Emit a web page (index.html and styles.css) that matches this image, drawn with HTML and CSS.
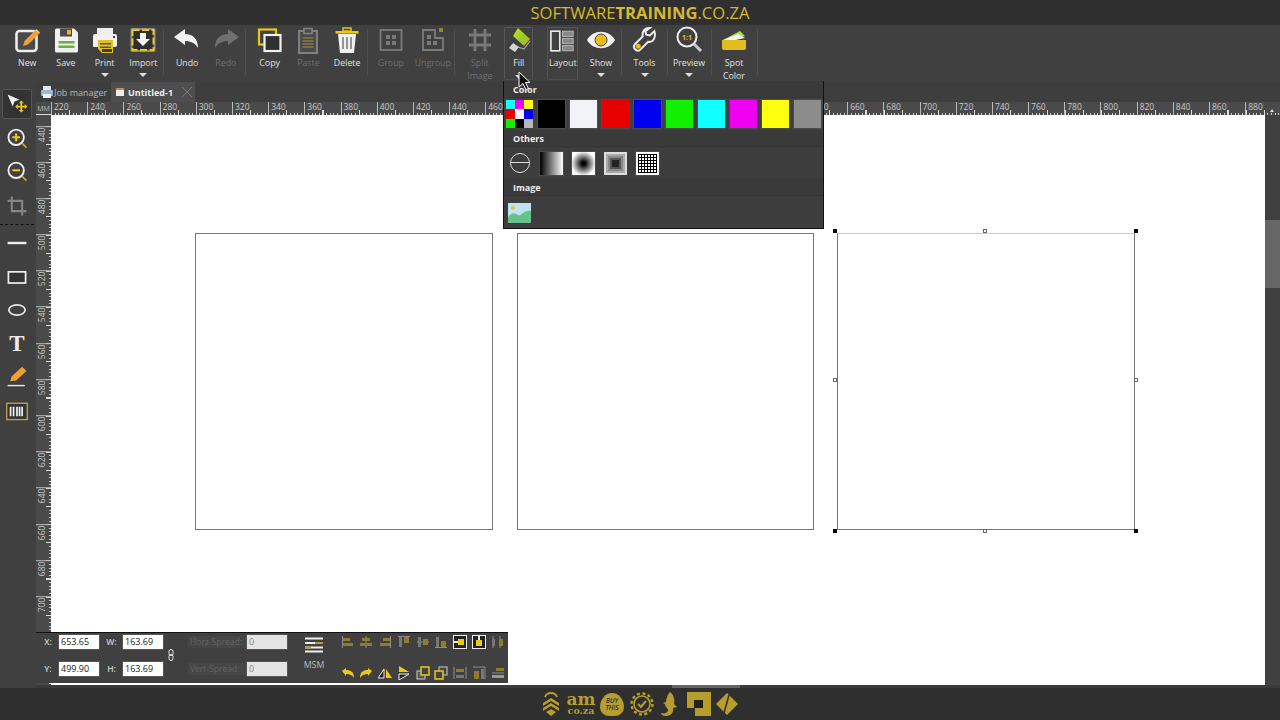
FILE: index.html
```html
<!DOCTYPE html>
<html lang="en">
<head>
<meta charset="utf-8">
<title>SoftwareTraining</title>
<link rel="stylesheet" href="styles.css">
</head>
<body>
<div class="app">
  <header class="title"><span>SOFTWARE<b>TRAINING</b>.CO.ZA</span></header>

  <nav class="toolbar">
    <div class="tb w38"><svg class="ic" viewBox="0 0 28 28"><rect x="3.500" y="5" width="20" height="20" rx="3" fill="#4a4a4a" stroke="#eee" stroke-width="2.600"/><path d="M10 20l1.500-5L22 4.500l4 3.500L15 18.500z" fill="#f0a030"/><path d="M22 4.500l1.500-1.500 3.500 3.500L26 8z" fill="#f7c04a"/></svg><span>New</span></div>
    <div class="tb w39"><svg class="ic" viewBox="0 0 28 28"><path d="M3 4a1.500 1.500 0 0 1 1.500-1.500H22l4 4V25a1.500 1.500 0 0 1-1.500 1.500h-20A1.500 1.500 0 0 1 3 25z" fill="#f0f0f0"/><rect x="8" y="2.500" width="12" height="8" fill="#4a4a4a"/><rect x="15" y="4" width="4" height="4.500" fill="#e0b92a"/><rect x="6.500" y="15" width="16" height="9" fill="#eee"/><rect x="6.500" y="15" width="16" height="2.500" fill="#6fae3c"/><rect x="6.500" y="19.500" width="16" height="2.500" fill="#6fae3c"/></svg><span>Save</span></div>
    <div class="tb w39"><svg class="ic" viewBox="0 0 28 28"><rect x="6" y="2" width="16" height="6" fill="#eee"/><path d="M2 10a2 2 0 0 1 2-2h20a2 2 0 0 1 2 2v9a2 2 0 0 1-2 2H2z" fill="#f2f2f2"/><rect x="22" y="10" width="2" height="2" fill="#444"/><path d="M7 14h15v13H11l-4-4z" fill="#e5c020"/><rect x="9" y="17" width="11" height="1.500" fill="#555"/><rect x="9" y="20.500" width="11" height="1.500" fill="#555"/><rect x="11" y="23" width="10" height="3" fill="#3c3c3c"/></svg><span>Print</span><i class="caret"></i></div>
    <div class="tb w39"><svg class="ic" viewBox="0 0 28 28"><rect x="1.500" y="2" width="25" height="24" rx="2" fill="#8a8a8a"/><rect x="3.500" y="4" width="21" height="20" fill="#2f2f2f" stroke="#e8c818" stroke-width="2" stroke-dasharray="7 2.500"/><path d="M11 7h6v6h4l-7 7-7-7h4z" fill="#f4f4f4"/></svg><span>Import</span><i class="caret"></i></div>
    <i class="sep"></i>
    <div class="tb w39 first"><svg class="ic" viewBox="0 0 28 28"><path d="M1 11L12 3v5c8 0 13 5 13 14-3-5-7-7-13-7v4z" fill="#f2f2f2"/></svg><span>Undo</span></div>
    <div class="tb w39 off"><svg class="ic" viewBox="0 0 28 28"><path d="M27 11L16 3v5C8 8 3 13 3 22c3-5 7-7 13-7v4z" fill="#707070"/></svg><span>Redo</span></div>
    <i class="sep"></i>
    <div class="tb w39 first"><svg class="ic" viewBox="0 0 28 28"><rect x="3" y="3.500" width="17" height="15" fill="none" stroke="#e8c818" stroke-width="2.200"/><rect x="8.500" y="9" width="16" height="16" fill="#303030" stroke="#f2f2f2" stroke-width="2.200"/></svg><span>Copy</span></div>
    <div class="tb w39 off"><svg class="ic" viewBox="0 0 28 28"><rect x="5" y="5" width="18" height="22" fill="#4a4a4a" stroke="#808080" stroke-width="2"/><rect x="10" y="2.500" width="8" height="5" fill="#4a4a4a" stroke="#808080" stroke-width="1.600"/><path d="M8.500 12h11M8.500 15h11M8.500 18h11M8.500 21h11" stroke="#85784a" stroke-width="1.300"/></svg><span>Paste</span></div>
    <div class="tb w39"><svg class="ic" viewBox="0 0 28 28"><path d="M5 8h18l-2 19H7z" fill="#f0f0f0"/><rect x="2.500" y="5" width="23" height="2.600" fill="#ecc818"/><rect x="10" y="2" width="8" height="3" fill="none" stroke="#ecc818" stroke-width="1.400"/><path d="M10 11v12M14 11v12M18 11v12" stroke="#777" stroke-width="1.500"/></svg><span>Delete</span></div>
    <i class="sep"></i>
    <div class="tb w39 first off"><svg class="ic" viewBox="0 0 28 28"><rect x="3.500" y="4" width="21" height="20" fill="none" stroke="#7a7a7a" stroke-width="1.800"/><path d="M9 9h4v4H9zM15 9h4v4h-4zM9 15h4v4H9zM15 15h4v4h-4z" fill="#7a7a7a"/></svg><span>Group</span></div>
    <div class="tb w43 off ug"><svg class="ic" viewBox="0 0 28 28"><path d="M4 4h12v8h8v12H4z" fill="none" stroke="#7a7a7a" stroke-width="1.800"/><path d="M8 9h4v4H8zM8 15h4v4H8zM14 15h4v4h-4z" fill="#7a7a7a"/><rect x="20" y="2" width="4" height="4" fill="#8b8b30"/></svg><span>Ungroup</span></div>
    <i class="sep"></i>
    <div class="tb w39 split off"><svg class="ic" viewBox="0 0 28 28"><path d="M9 3v22M19 3v22M3 9h22M3 19h22" stroke="#7a7a7a" stroke-width="2.800" fill="none"/></svg><span>Split<br>Image</span></div>
    <div class="tb boxed fill"><svg class="ic" viewBox="0 0 28 28"><defs><linearGradient id="roller" x1="0" y1="0" x2="1" y2="1"><stop offset="0" stop-color="#e6d81e"/><stop offset="0.550" stop-color="#8ccf2a"/><stop offset="1" stop-color="#f09a20"/></linearGradient></defs><path d="M8 9L13 1l12 11-6 7z" fill="url(#roller)"/><path d="M25 14l-6 8-6-2" fill="none" stroke="#aaa" stroke-width="1.200"/><path d="M8 16l6 4-4 5-6-4z" fill="#d4d4d4"/></svg><span>Fill</span><i class="caret"></i></div>
    <div class="tb boxed layout"><svg class="ic wide" viewBox="0 0 28 28"><rect x="1" y="3" width="10" height="22" fill="none" stroke="#eee" stroke-width="1.800"/><rect x="14" y="3" width="12" height="6" fill="#888" stroke="#bbb"/><rect x="14" y="11" width="12" height="6" fill="#888" stroke="#bbb"/><rect x="14" y="19" width="12" height="6" fill="#888" stroke="#bbb"/></svg><span>Layout</span></div>
    <div class="tb w40"><svg class="ic" viewBox="0 0 28 28"><path d="M0 14C6 3 22 3 28 14 22 25 6 25 0 14z" fill="#f2f2f2"/><circle cx="14" cy="14" r="6" fill="#e8bd1c" stroke="#444" stroke-width="1"/></svg><span>Show</span><i class="caret"></i></div>
    <i class="sep near"></i>
    <div class="tb w45b"><svg class="ic tw" viewBox="0 0 28 28"><path d="M25 4l-5 5-4-1-1-4 5-3.500C15 0 11 4 12 10L3 19c-3 4 3 9 6 6l9-9c6 1 9-5 7-12z" fill="none" stroke="#eee" stroke-width="2.200"/><circle cx="7" cy="21" r="2.800" fill="#e8bd1c"/></svg><span>Tools</span><i class="caret"></i></div>
    <i class="sep near neg"></i>
    <div class="tb w45"><svg class="ic" viewBox="0 0 28 28"><circle cx="12" cy="11" r="9.500" fill="none" stroke="#eee" stroke-width="2"/><path d="M19 18l7 7" stroke="#ccc" stroke-width="3"/><text class="one" x="12" y="14">1:1</text></svg><span>Preview</span><i class="caret"></i></div>
    <i class="sep near neg"></i>
    <div class="tb w46"><svg class="ic" viewBox="0 0 28 28"><path d="M3 14L20 5l5 5-15 5z" fill="#a6e040"/><path d="M3 14l15-6 7 4-14 3z" fill="#f2f2f2"/><path d="M2 14h24v8a2 2 0 0 1-2 2H4a2 2 0 0 1-2-2z" fill="#e3bd1e"/></svg><span>Spot<br>Color</span></div>
    <i class="sep near"></i>
  </nav>

  <div class="work">
    <aside class="tools">
      <div class="tool active"><svg class="t" viewBox="0 0 28 28"><path d="M3 3l14 6-6 2-2 6z" fill="#f2f2f2"/><path d="M19 10l3 3h-2v3h3v-2l3 3-3 3v-2h-3v3h2l-3 3-3-3h2v-3h-3v2l-3-3 3-3v2h3v-3h-2z" fill="#ecc818"/></svg></div>
      <div class="tool"><svg class="t" viewBox="0 0 28 28"><circle cx="13" cy="12" r="9" fill="none" stroke="#eee" stroke-width="2.200"/><path d="M8.500 12h9M13 7.500v9" stroke="#ecc818" stroke-width="2.400"/><path d="M20 19l5 5" stroke="#c9a820" stroke-width="2"/></svg></div>
      <div class="tool"><svg class="t" viewBox="0 0 28 28"><circle cx="13" cy="12" r="9" fill="none" stroke="#eee" stroke-width="2.200"/><path d="M8.500 12h9" stroke="#ecc818" stroke-width="2.400"/><path d="M20 19l5 5" stroke="#c9a820" stroke-width="2"/></svg></div>
      <div class="tool cropt"><svg class="t" viewBox="0 0 28 28"><path d="M8 3v17h17M3 8h17v17" fill="none" stroke="#858585" stroke-width="2.400"/></svg></div>
      <div class="dash"></div>
      <div class="tool"><svg class="t" viewBox="0 0 28 28"><path d="M3 14h22" stroke="#eee" stroke-width="2.800"/></svg></div>
      <div class="tool"><svg class="t" viewBox="0 0 28 28"><rect x="4" y="8" width="20" height="13" fill="#333" stroke="#eee" stroke-width="2"/></svg></div>
      <div class="tool"><svg class="t" viewBox="0 0 28 28"><ellipse cx="14" cy="14" rx="9.500" ry="6" fill="none" stroke="#eee" stroke-width="2"/></svg></div>
      <div class="tool glyph">T</div>
      <div class="tool"><svg class="t" viewBox="0 0 28 28"><path d="M6 19l2-6L20 2l5 5-12 11z" fill="#f0a030"/><path d="M3 24h20" stroke="#eee" stroke-width="1.600"/></svg></div>
      <div class="tool"><svg class="t" viewBox="0 0 28 28"><rect x="2" y="5" width="24" height="19" fill="#333" stroke="#b9a24a" stroke-width="1.600"/><path d="M6.500 9v11M10 9v11M14 9v11M17 9v11M20 9v11" stroke="#eee" stroke-width="2"/></svg></div>
    </aside>

    <div class="doc">
      <div class="tabs">
        <div class="tab job"><svg class="mini" viewBox="0 0 14 14"><rect x="3" y="1" width="8" height="4" fill="#dfe8f2"/><rect x="1" y="5" width="12" height="6" rx="1" fill="#9db9d6"/><rect x="3" y="9" width="8" height="4" fill="#eef2f6"/></svg><span>Job manager</span></div>
        <div class="tab cur"><i class="docic"></i><b>Untitled-1</b><svg class="close" viewBox="0 0 12 12"><path d="M1 1l10 10M11 1L1 11" stroke="#777" stroke-width="1"/></svg></div>
      </div>
      <div class="rulerh">
        <span class="corner">MM</span>
        <div class="hscale">
          <span>220</span><span>240</span><span>260</span><span>280</span><span>300</span><span>320</span><span>340</span><span>360</span><span>380</span><span>400</span><span>420</span><span>440</span><span>460</span><span>480</span><span>500</span><span>520</span><span>540</span><span>560</span><span>580</span><span>600</span><span>620</span><span>640</span><span>660</span><span>680</span><span>700</span><span>720</span><span>740</span><span>760</span><span>780</span><span>800</span><span>820</span><span>840</span><span>860</span><span>880</span>
        </div>
      </div>
      <div class="body">
        <div class="rulerv">
          <span>440</span><span>460</span><span>480</span><span>500</span><span>520</span><span>540</span><span>560</span><span>580</span><span>600</span><span>620</span><span>640</span><span>660</span><span>680</span><span>700</span>
        </div>
        <main class="canvas">
          <div class="page p1"></div>
          <div class="page p2"></div>
          <div class="page p3"></div>
          <i class="h big tl"></i>
          <i class="h big tr"></i>
          <i class="h big bl"></i>
          <i class="h big br"></i>
          <i class="h tm"></i>
          <i class="h bm"></i>
          <i class="h ml"></i>
          <i class="h mr"></i>
        </main>
        <div class="scrollv"><i class="up"></i><i class="thumb"></i></div>
      </div>
      <div class="scrollh"><i></i></div>
    </div>
  </div>

  <footer class="foot">
    <svg class="lg l1" viewBox="0 0 20 26"><path d="M4 6c1-3 3-4 6-4s5 1 6 4" fill="none" stroke="#b79d2e" stroke-width="2"/><path d="M2 12l8-5 8 5v3l-8-5-8 5zM2 17l8-5 8 5v3l-8-5-8 5zM5 21l5-3 5 3-5 4z" fill="#b79d2e"/></svg>
    <div class="am"><b>am</b><b class="cz">co.za</b></div>
    <div class="buy"><span>BUY<br>THIS</span></div>
    <svg class="lg l4" viewBox="0 0 24 24"><circle cx="12" cy="12" r="8" fill="none" stroke="#b79d2e" stroke-width="1.600"/><circle cx="12" cy="12" r="10.500" fill="none" stroke="#b79d2e" stroke-width="2.400" stroke-dasharray="3 2.500"/><path d="M8 12l3 3 5-6" fill="none" stroke="#b79d2e" stroke-width="2"/></svg>
    <svg class="lg l5" viewBox="0 0 18 26"><path d="M9 1c4 3 5 8 4 12l3 3-4 1c1 4-2 8-7 8-3 0-5-1-5-3 3 1 7 0 7-3 0-2-3-3-3-6L2 12l3-1c0-4 2-8 4-10z" fill="#b79d2e"/></svg>
    <svg class="lg l6" viewBox="0 0 24 24"><path d="M0 0h24v24H8v-8h8V8H8v8H0z" fill="#b79d2e"/><rect x="7" y="8" width="9" height="8" fill="#222"/></svg>
    <svg class="lg l7" viewBox="0 0 24 24"><path d="M12 1l11 11-11 11L1 12z" fill="#b79d2e"/><path d="M14 3L9 21" stroke="#2f2f2f" stroke-width="1.500"/></svg>
  </footer>

  <div class="props">
    <div class="pcol first-col">
      <div class="prow"><label>X:</label><span class="inp">653.65</span><label class="l2">W:</label><span class="inp">163.69</span></div>
      <div class="prow"><label>Y:</label><span class="inp">499.90</span><label class="l2">H:</label><span class="inp">163.69</span></div>
    </div>
    <svg class="chain" viewBox="0 0 6 12"><rect x="1" y="0.500" width="4" height="6" rx="2" fill="none" stroke="#eee"/><rect x="1" y="5.500" width="4" height="6" rx="2" fill="none" stroke="#eee"/></svg>
    <div class="pcol spread">
      <div class="prow"><label class="dis">Horz-Spread:</label><span class="inp dim">0</span></div>
      <div class="prow"><label class="dis">Vert-Spread:</label><span class="inp dim">0</span></div>
    </div>
    <div class="msm">
      <svg class="msmic" viewBox="0 0 18 16"><path d="M0 1.500h18M0 6h18M0 10.500h18M0 14.500h18" stroke="#eee" stroke-width="1.800"/><path d="M10 6h8M0 10.500h6" stroke="#b79d2e" stroke-width="1.800"/></svg>
      <span>MSM</span>
    </div>
    <div class="aligns">
      <svg viewBox="0 0 14 14"><path d="M1.500 1v12" stroke="#8d8d8d"/><path d="M2 3h7v3H2zM2 8h10v3H2z" fill="#8c7c2c"/></svg>
      <svg viewBox="0 0 14 14"><path d="M7 1v12" stroke="#8d8d8d"/><path d="M3 3h8v3H3zM1 8h12v3H1z" fill="#8c7c2c"/></svg>
      <svg viewBox="0 0 14 14"><path d="M12.500 1v12" stroke="#8d8d8d"/><path d="M5 3h7v3H5zM2 8h10v3H2z" fill="#8c7c2c"/></svg>
      <svg viewBox="0 0 14 14"><path d="M1 1.500h12" stroke="#8d8d8d"/><path d="M2 2h3v10H2z" fill="#777"/><path d="M7 2h5v6H7z" fill="#8c7c2c"/></svg>
      <svg viewBox="0 0 14 14"><path d="M1 7h12" stroke="#8d8d8d"/><path d="M2 2h3v10H2z" fill="#777"/><path d="M7 4h5v6H7z" fill="#8c7c2c"/></svg>
      <svg viewBox="0 0 14 14"><path d="M1 12.500h12" stroke="#8d8d8d"/><path d="M2 2h3v10H2z" fill="#777"/><path d="M7 6h5v6H7z" fill="#8c7c2c"/></svg>
      <svg viewBox="0 0 14 14"><rect x="0.500" y="0.500" width="13" height="13" fill="#222" stroke="#eee"/><path d="M5 4h6v6H5z" fill="#ecc818"/><path d="M1 7h4" stroke="#eee" stroke-width="2"/></svg>
      <svg viewBox="0 0 14 14"><rect x="0.500" y="0.500" width="13" height="13" fill="#222" stroke="#eee"/><path d="M4 5h6v6H4z" fill="#ecc818"/><path d="M7 1v4" stroke="#eee" stroke-width="2"/></svg>
      <svg viewBox="0 0 14 14"><path d="M2 1v12M9 1v12" stroke="#8d8d8d"/><path d="M1 4h3v7H1z" fill="#777"/><path d="M8 4h4v7H8z" fill="#8c7c2c"/></svg>
      <svg viewBox="0 0 14 14"><path d="M1 5l4-3v2c5 0 8 2 8 8-2-3-4-4-8-4v2z" fill="#ecc818"/></svg>
      <svg viewBox="0 0 14 14"><path d="M13 5L9 2v2C4 4 1 6 1 12c2-3 4-4 8-4v2z" fill="#ecc818"/></svg>
      <svg viewBox="0 0 14 14"><path d="M6 3v9H0z" fill="#222" stroke="#eee"/><path d="M8 3v9h6z" fill="#ecc818"/></svg>
      <svg viewBox="0 0 14 14"><path d="M2 6h10L2 0z" fill="#ecc818"/><path d="M2 8h10L2 14z" fill="#222" stroke="#eee"/></svg>
      <svg viewBox="0 0 14 14"><rect x="1" y="5" width="8" height="8" fill="#555" stroke="#ccc"/><rect x="5" y="1" width="8" height="8" fill="#444" stroke="#ecc818" stroke-width="1.500"/></svg>
      <svg viewBox="0 0 14 14"><rect x="5" y="1" width="8" height="8" fill="#444" stroke="#ccc"/><rect x="1" y="5" width="8" height="8" fill="#444" stroke="#ecc818" stroke-width="1.500"/></svg>
      <svg viewBox="0 0 14 14"><path d="M1 1v12M13 1v12" stroke="#8d8d8d"/><path d="M3 3h8v3H3z" fill="#8c7c2c"/><path d="M3 9h8v3H3z" fill="#777"/></svg>
      <svg viewBox="0 0 14 14"><path d="M1 1h12M13 1v12" stroke="#8d8d8d"/><path d="M2 5h5v8H2z" fill="#8c7c2c"/><path d="M9 3h3v10H9z" fill="#777"/></svg>
      <svg viewBox="0 0 14 14"><path d="M1 7h12" stroke="#8d8d8d"/><path d="M5 2h8v3H5z" fill="#8c7c2c"/><path d="M1 9h12v3H1z" fill="#999"/></svg>
    </div>
  </div>

  <section class="pop">
    <h4 class="ph">Color</h4>
    <div class="swrow">
      <div class="mosaic"><i class="c1"></i><i class="c2"></i><i class="c3"></i><i class="c4"></i><i class="c5"></i><i class="c6"></i><i class="c7"></i><i class="c8"></i><i class="c9"></i></div>
      <i class="sw black"></i><i class="sw white"></i><i class="sw red"></i><i class="sw blue"></i><i class="sw green"></i><i class="sw cyan"></i><i class="sw magenta"></i><i class="sw yellow"></i><i class="sw gray"></i>
    </div>
    <h4 class="ph">Others</h4>
    <div class="otrow">
      <div class="none"><i></i></div>
      <i class="gr linear"></i><i class="gr radial"></i><i class="gr rect"></i><i class="gr grid"></i>
    </div>
    <h4 class="ph">Image</h4>
    <div class="imrow">
      <svg class="pic" viewBox="0 0 23 20"><rect width="23" height="20" fill="#bfe4ef"/><circle cx="5" cy="5" r="2" fill="#e8c040"/><path d="M0 14c4-5 7-4 10-2s6-6 13-4v12H0z" fill="#68c38a"/></svg>
    </div>
  </section>

  <svg class="cursor" viewBox="0 0 14 20"><path d="M1 1v15l4-3.500 3 6 2.500-1-3-6H12z" fill="#111" stroke="#fff" stroke-width="1"/></svg>
</div>
</body>
</html>
```

FILE: styles.css
```css
* { box-sizing: border-box; }
html, body { margin: 0; padding: 0; }
body { width: 1280px; height: 720px; overflow: hidden; background: #2f2f2f; font-family: "Open Sans", "Noto Sans", sans-serif; color: #ddd; }
i { display: block; font-style: normal; }
.app { position: relative; width: 1280px; height: 720px; display: flex; flex-direction: column; overflow: hidden; }

.title { height: 25px; background: #2f2f2f; display: flex; justify-content: center; align-items: center; color: #d8b92c; font-size: 16.600px; line-height: 25px; }
.title b { font-weight: 700; }

.toolbar { height: 57px; background: #404040; display: flex; padding: 1px 0 0 8px; flex: none; }
.tb { position: relative; display: flex; flex-direction: column; align-items: center; font-size: 8.800px; line-height: 13px; color: #e0e0e0; text-align: center; flex: none; }
.tb span { margin-top: 3px; }
.ic { width: 28px; height: 28px; flex: none; }
.ic.tw { width: 25px; }
.w38 { width: 38.500px; } .w39 { width: 38.750px; } .w40 { width: 40px; } .w43 { width: 43px; } .w45 { width: 44px; } .w45b { width: 45px; } .w46 { width: 46px; }
.first { margin-left: 4px; }
.ug { margin-left: 1px; }
.split { margin-left: 5.250px; }
.off { color: #6e6e6e; }
.sep { width: 1px; height: 46px; margin-top: 3px; background: #4e4e4e; flex: none; }
.near { margin: 3px 0 0; }
.neg { margin-right: -1px; }
.tb.boxed { height: 53px; border: 1px solid #555; border-bottom-color: #4c4c4c; margin-top: 1px; border-radius: 2px; }
.tb.boxed .ic { margin-top: -1px; }
.tb.boxed span { margin-top: 2px; }
.fill { width: 29px; margin-left: 5px; }
.layout { width: 31px; margin: 0 2.750px 0 14px; }
.ic.wide { width: 25px; }
.caret { position: absolute; top: 47px; left: 50%; margin-left: -4px; width: 0; height: 0; border: 4px solid transparent; border-top-color: #ddd; border-bottom: 0; }
.one { font: 700 7px "Open Sans", sans-serif; fill: #e8bd1c; text-anchor: middle; }

.work { flex: 1; display: flex; min-height: 0; }
.tools { width: 36px; flex: none; background: #404040; padding: 7px 0 0 2px; display: flex; flex-direction: column; }
.tool { width: 30px; height: 33.500px; display: flex; align-items: center; justify-content: center; flex: none; }
.tool.active { background: #333; border: 1px solid #555; border-radius: 2px; height: 30px; margin-bottom: 3px; }
.t { width: 24px; height: 24px; }
.dash { width: 34px; height: 0; margin: 2px 0 2px -2px; border-top: 1px dashed #111; }
.cropt { margin-bottom: -1px; }
.glyph { font: 700 23px "Liberation Serif", serif; color: #eee; line-height: 30px; }

.doc { flex: 1; display: flex; flex-direction: column; min-width: 0; }
.tabs { height: 20px; background: #3e3e3e; display: flex; align-items: stretch; flex: none; font-size: 9px; padding-left: 4px; }
.tab { display: flex; align-items: center; }
.job { width: 71px; color: #b8b8b8; }
.mini { width: 14px; height: 14px; }
.cur { width: 84px; background: #4e4e4e; color: #eee; padding-left: 5px; font-size: 9px; }
.docic { width: 8px; height: 8px; background: #eee; border-top: 2px solid #c98a5a; margin-right: 4px; }
.close { width: 12px; height: 12px; margin-left: auto; margin-right: 2px; }

.rulerh { height: 13px; background: #4a4a4a; display: flex; flex: none; position: relative; }
.corner { width: 15px; font-size: 7px; line-height: 14px; color: #bbb; text-align: center; border-bottom: 1px solid #ddd; }
.hscale { flex: 1; display: flex; overflow: hidden;
  background:
    repeating-linear-gradient(to right, #ddd 0 1px, transparent 1px 18.100px) 0 100% / 100% 5px no-repeat,
    repeating-linear-gradient(to right, #ccc 0 1px, transparent 1px 3.620px) 0 100% / 100% 2px no-repeat; }
.hscale span { flex: none; width: 36.200px; height: 13px; padding-left: 2px; border-left: 1px solid #bbb; font-size: 8.500px; line-height: 10px; color: #c8c8c8; }

.body { flex: 1; display: flex; min-height: 0; }
.rulerv { width: 15px; flex: none; background-color: #4a4a4a; padding-top: 10.500px; overflow: hidden; display: flex; flex-direction: column;
  background-image:
    repeating-linear-gradient(to bottom, #ddd 0 1px, transparent 1px 18.100px),
    repeating-linear-gradient(to bottom, #ccc 0 1px, transparent 1px 3.620px);
  background-size: 5px 100%, 2px 100%;
  background-position: 100% 10.500px, 100% 10.500px;
  background-repeat: no-repeat; }
.rulerv span { flex: none; height: 36.200px; writing-mode: vertical-rl; transform: rotate(180deg); font-size: 8.500px; line-height: 10px; color: #c8c8c8; text-align: right; padding: 0 1px 1px 0; border-bottom: 1px solid #bbb; }

.canvas { flex: 1; position: relative; background: #fff; min-width: 0; }
.page { position: absolute; width: 298px; height: 297px; top: 118px; border: 1px solid #777; background: #fff; }
.p1 { left: 144px; }
.p2 { left: 466px; width: 297px; }
.p3 { left: 786px; border-top-color: #ccc; }
.h { position: absolute; width: 4px; height: 4px; background: #fff; border: 1px solid #666; }
.h.big { background: #000; border: 0; }
.tl { left: 782px; top: 114px; } .tr { left: 1083px; top: 114px; }
.bl { left: 782px; top: 414px; } .br { left: 1083px; top: 414px; }
.tm { left: 932px; top: 114px; } .bm { left: 932px; top: 414px; }
.ml { left: 782px; top: 263px; } .mr { left: 1083px; top: 263px; }

.scrollv { width: 15px; flex: none; background: #404040; position: relative; }
.up { position: absolute; left: 5px; top: -6px; width: 0; height: 0; border: 2px solid transparent; border-bottom: 3px solid #ddd; border-top: 0; }
.thumb { position: absolute; left: 0; top: 105px; width: 15px; height: 68px; background: #666; }

.scrollh { height: 3px; background: #3a3a3a; flex: none; position: relative; }
.scrollh i { position: absolute; left: 636px; width: 68px; height: 3px; background: #666; }

.foot { height: 32px; flex: none; background: #2f2f2f; display: flex; align-items: center; padding-left: 541px; }
.lg { flex: none; }
.l1 { width: 20px; height: 26px; margin-right: 6px; }
.am { width: 28px; height: 23px; display: flex; flex-direction: column; align-items: center; color: #b79d2e; font-family: "DejaVu Serif", serif; }
.am b { font-size: 17px; line-height: 13px; height: 13px; }
.am .cz { font-size: 9.500px; line-height: 10px; height: 10px; }
.buy { width: 24px; height: 23px; margin-left: 5px; background: #b79d2e; border-radius: 50% 50% 40% 40% / 62% 62% 38% 38%; color: #2f2f2f; font-size: 6.500px; line-height: 7px; font-style: italic; text-align: center; display: flex; align-items: center; justify-content: center; font-weight: 600; }
.l4 { width: 24px; height: 24px; margin-left: 6px; }
.l5 { width: 18px; height: 26px; margin-left: 7px; }
.l6 { width: 24px; height: 24px; margin-left: 8px; }
.l7 { width: 24px; height: 24px; margin-left: 4px; }

.props { position: absolute; left: 36px; top: 632px; width: 472px; height: 51px; background: #404040; border-top: 1px solid #111; display: flex; font-size: 9px; color: #ccc; }
.pcol { display: flex; flex-direction: column; gap: 13px; padding-top: 2px; }
.prow { display: flex; align-items: center; height: 14px; }
.prow label { width: 23px; padding-bottom: 1px; text-align: center; font-weight: 600; font-size: 8.500px; }
.first-col label { padding-left: 1px; }
.prow label.l2 { width: 24px; }
.inp { width: 40px; height: 14px; background: #fff; color: #222; font-size: 9px; line-height: 14px; padding-left: 2px; box-shadow: 0 0 0 1px #555; }
.chain { width: 6px; height: 12px; margin: 16px 0 0 5px; flex: none; }
.spread { margin-left: 14px; }
.prow label.dis { width: 59px; color: #636363; font-weight: 400; font-size: 8.500px; text-align: left; padding-left: 2px; background: #464646; }
.inp.dim { background: #e4e4e4; color: #888; }
.msm { width: 18px; margin-left: 18px; display: flex; flex-direction: column; align-items: center; padding-top: 4px; font-size: 8.800px; color: #bbb; }
.msmic { width: 18px; height: 16px; flex: none; }
.msm span { margin-top: 6px; }
.aligns { margin-left: 17.500px; display: grid; grid-template-columns: repeat(9, 14px); column-gap: 4.800px; row-gap: 17px; padding-top: 2px; align-content: start; }
.aligns svg { width: 14px; height: 14px; }

.pop { position: absolute; left: 503px; top: 81px; width: 321px; height: 148px; background: #383838; border: 1px solid #111; border-top: 0; }
.ph { margin: 0; height: 17px; padding-left: 9px; font-size: 9px; line-height: 17px; font-weight: 700; color: #eee; background: #3a3a3a; border-bottom: 1px solid #333; }
.swrow { height: 32px; display: flex; gap: 5px; padding: 2px 0 0 2px; background: #404040; }
.sw { width: 27px; height: 28px; box-shadow: 0 0 0 1px #4a4a4a; }
.black { background: #000; } .white { background: #f2f4f8; } .red { background: #e60000; } .blue { background: #0000ee; }
.green { background: #10f000; } .cyan { background: #10ffff; } .magenta { background: #f000f0; } .yellow { background: #ffff10; } .gray { background: #8c8c8c; }
.mosaic { width: 27px; height: 28px; display: grid; grid-template-columns: repeat(3, 9px); grid-auto-rows: 9.300px; }
.c1 { background: #10ffff; } .c2 { background: #f000f0; } .c3 { background: #ffff10; } .c4 { background: #e60000; } .c5 { background: #f4f4f4; } .c6 { background: #0000ee; } .c7 { background: #10f000; } .c8 { background: #000; } .c9 { background: #b4b8bc; }
.otrow { height: 32px; display: flex; gap: 9px; padding: 5px 0 0 6px; align-items: flex-start; background: #3d3d3d; }
.none { width: 20px; height: 20px; position: relative; border: 1px solid #ddd; border-radius: 50%; flex: none; margin: 1px 1px 0 0; }
.none i { position: absolute; left: 0; right: 0; top: 8px; height: 1px; background: #ddd; }
.gr { width: 23px; height: 23px; box-shadow: 0 0 0 1px #4a4a4a; flex: none; }
.linear { background: linear-gradient(to right, #000, #fff); }
.radial { background: radial-gradient(circle, #000 10%, #fff 75%); }
.rect { background: #222; box-shadow: inset 0 0 0 2px #ddd, inset 0 0 0 4px #aaa, inset 0 0 0 6px #888, inset 0 0 0 8px #555; }
.grid { background-color: #fff; background-image: repeating-linear-gradient(to right, #000 0 1.300px, transparent 1.300px 3px), repeating-linear-gradient(to bottom, #000 0 1.300px, transparent 1.300px 3px); border: 2px solid #fff; }
.imrow { height: 32px; padding: 7px 0 0 4px; background: #3d3d3d; }
.pic { width: 23px; height: 20px; display: block; }

.cursor { position: absolute; left: 518px; top: 71px; width: 14px; height: 20px; }
```
